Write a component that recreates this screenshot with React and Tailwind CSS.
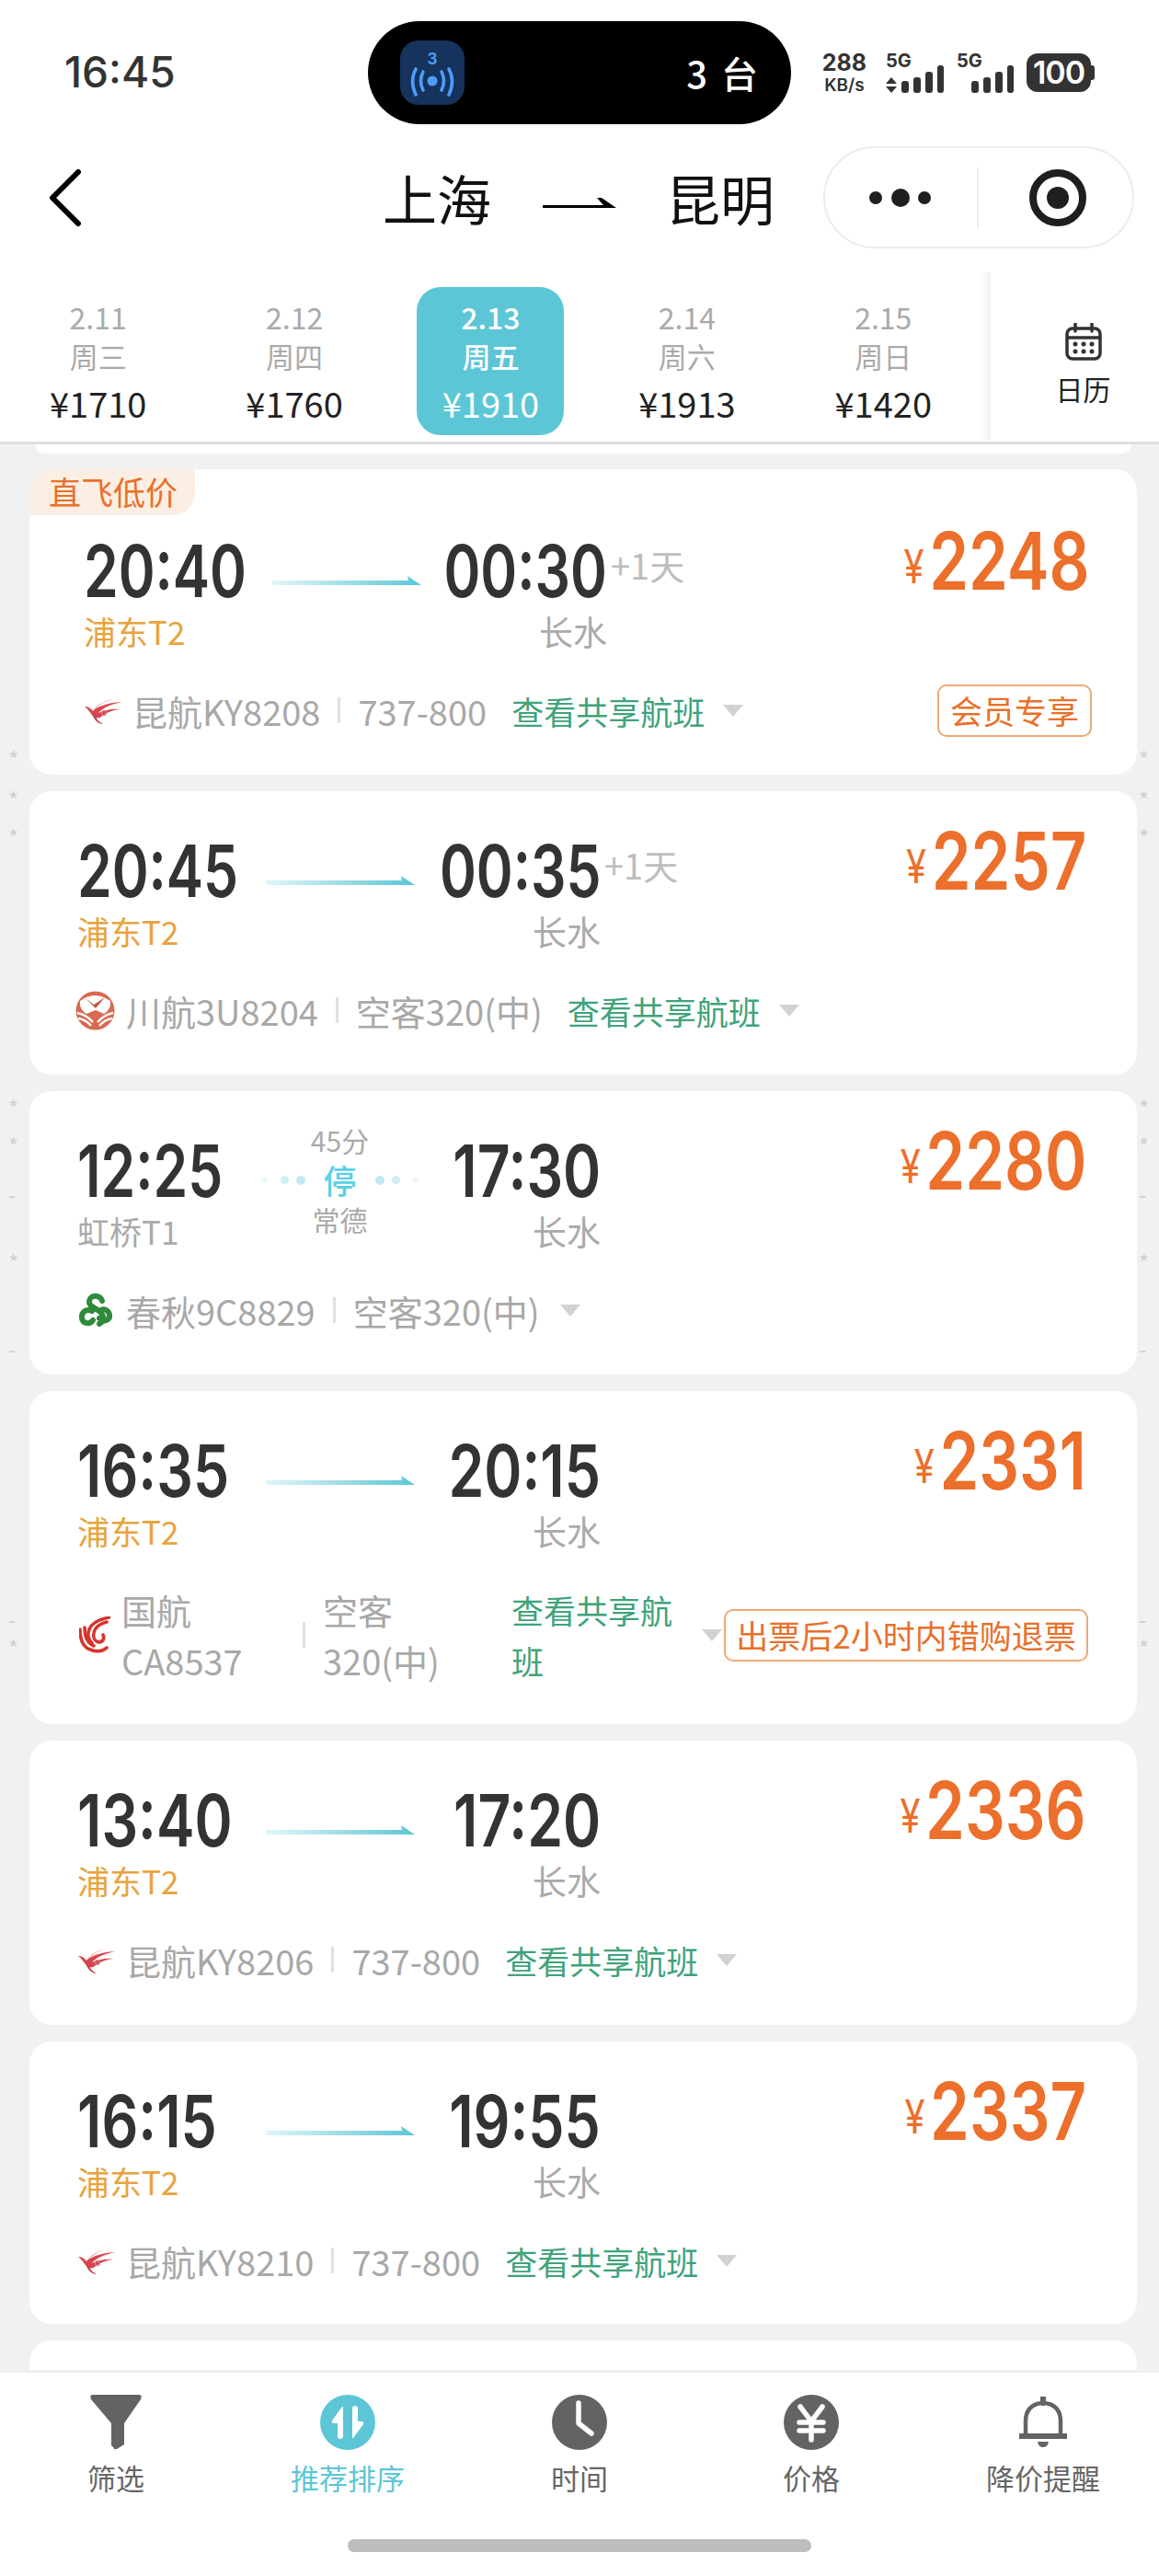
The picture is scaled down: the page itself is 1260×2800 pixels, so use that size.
const dates = [
    { d: '2.11', w: '周三', p: '¥1710' },
    { d: '2.12', w: '周四', p: '¥1760' },
    { d: '2.13', w: '周五', p: '¥1910', active: true },
    { d: '2.14', w: '周六', p: '¥1913' },
    { d: '2.15', w: '周日', p: '¥1420' },
];

const flights = [
    { h: 'h-[332px]', dep: '20:40', arr: '00:30', plus: true, from: '浦东T2', price: '2248', logo: 'ky', name: '昆航KY8208', model: '737-800', share: true, tag: '会员专享', promo: true },
    { h: 'h-[308px]', dep: '20:45', arr: '00:35', plus: true, from: '浦东T2', price: '2257', logo: '3u', name: '川航3U8204', model: '空客320(中)', share: true },
    { h: 'h-[308px]', dep: '12:25', arr: '17:30', from: '虹桥T1', gray: true, price: '2280', logo: '9c', name: '春秋9C8829', model: '空客320(中)', stop: true },
    { h: 'h-[362px]', dep: '16:35', arr: '20:15', from: '浦东T2', price: '2331', logo: 'ca', name: '国航CA8537', model: '空客320(中)', share: true, tag: '出票后2小时内错购退票', wrap: true },
    { h: 'h-[309px]', dep: '13:40', arr: '17:20', from: '浦东T2', price: '2336', logo: 'ky', name: '昆航KY8206', model: '737-800', share: true },
    { h: 'h-[307px]', dep: '16:15', arr: '19:55', from: '浦东T2', price: '2337', logo: 'ky', name: '昆航KY8210', model: '737-800', share: true },
];

const marks = [
    { y: 'top-[330px]', c: '*' }, { y: 'top-[374px]', c: '*' }, { y: 'top-[415px]', c: '*' },
    { y: 'top-[709px]', c: '*' }, { y: 'top-[750px]', c: '*' }, { y: 'top-[803px]', c: '-' },
    { y: 'top-[877px]', c: '*' }, { y: 'top-[971px]', c: '-' }, { y: 'top-[1265px]', c: '-' },
    { y: 'top-[1296px]', c: '*' },
];

const timeScale = (t) => (t === '12:25' || !t.includes('1') ? 'scale-x-[.775]' : 'scale-x-[.8]');

const Signal = () => (
    <svg width="46" height="30" viewBox="0 0 46 30" fill="#333">
        <rect x="0" y="17" width="8" height="13" rx="3" />
        <rect x="13" y="13" width="8" height="17" rx="3" />
        <rect x="26" y="7" width="8" height="23" rx="3" />
        <rect x="39" y="0" width="7" height="30" rx="3" />
    </svg>
);

const StatusBar = () => (
    <div className="flex items-center h-[159px] pb-[1px] relative">
        <div className="w-[400px] pl-[70px] pb-[2px] font-['Inter',sans-serif] font-medium text-[46px] leading-[56px] text-[#333]">16:45</div>
        <div className="w-[460px] h-[112px] -mt-[1px] rounded-full bg-black flex items-center justify-between pl-[35px] pr-[33px]">
            <div className="w-[70px] h-[70px] rounded-[20px] bg-[#15335c] flex flex-col items-center">
                <span className="font-['Inter',sans-serif] font-bold text-[17px] leading-[18px] mt-[11px] text-[#4c9cfb]">3</span>
                <svg width="52" height="34" viewBox="0 0 52 34" fill="none" stroke="#4c9cfb" strokeWidth="3.6" strokeLinecap="round">
                    <circle cx="26" cy="15" r="5.5" fill="#4c9cfb" stroke="none" />
                    <path d="M16 5 Q11 15 16 25" />
                    <path d="M36 5 Q41 15 36 25" />
                    <path d="M8 2 Q1 15 8 30" />
                    <path d="M44 2 Q51 15 44 30" />
                </svg>
            </div>
            <span className="text-white font-medium text-[40px] leading-[50px] tracking-[3px]">3 台</span>
        </div>
        <div className="flex items-start ml-[33px] text-[#333] font-['Inter',sans-serif]">
            <div className="w-[50px] flex flex-col items-center">
                <span className="font-bold text-[25px] leading-[28px]">288</span>
                <span className="font-semibold text-[19px] leading-[22px] whitespace-nowrap">KB/s</span>
            </div>
            <div className="relative w-[64px] h-[50px] ml-[20px]">
                <span className="absolute left-0 top-[1px] font-bold text-[20px] leading-[22px]">5G</span>
                <svg className="absolute left-0 top-[30px]" width="12" height="17" viewBox="0 0 12 17" fill="#333"><path d="M6 0 L12 7 H0 Z M0 10 H12 L6 17 Z" /></svg>
                <div className="absolute left-[17px] top-[17px]"><Signal /></div>
            </div>
            <div className="relative w-[64px] h-[50px] ml-[13px]">
                <span className="absolute left-0 top-[1px] font-bold text-[20px] leading-[22px]">5G</span>
                <div className="absolute left-[16px] top-[17px]"><Signal /></div>
            </div>
            <div className="flex items-center ml-[12px] mt-[4px]">
                <div className="w-[70px] h-[42px] rounded-[12px] bg-[#333] flex items-center justify-center text-white font-semibold text-[34px] leading-[42px] tracking-[-1px]">100</div>
                <div className="w-[4px] h-[16px] rounded-r-[3px] bg-[#333]"></div>
            </div>
        </div>
    </div>
);

const NavBar = () => (
    <div className="flex items-center h-[111px] relative">
        <svg className="ml-[50px]" width="42" height="64" viewBox="0 0 42 64" fill="none" stroke="#000" strokeWidth="6" strokeLinecap="round" strokeLinejoin="round">
            <path d="M35 4 L7 32 L35 60" />
        </svg>
        <span className="ml-[324px] text-[59px] leading-[70px] text-[#111]">上海</span>
        <svg className="ml-[56px] mt-[10px]" width="80" height="16" viewBox="0 0 80 16" fill="#000">
            <path d="M0 11 H66 L59 3 L64 3 L80 14 H0 Z" />
        </svg>
        <span className="ml-[54px] text-[59px] leading-[70px] text-[#111]">昆明</span>
        <div className="ml-[53px] w-[338px] h-[111px] rounded-full border-2 border-[#ececec] flex items-center">
            <svg className="ml-[44px]" width="74" height="24" viewBox="0 0 74 24" fill="#1f1f1f">
                <circle cx="11" cy="12" r="7" />
                <circle cx="38" cy="12" r="10" />
                <circle cx="64" cy="12" r="7" />
            </svg>
            <div className="ml-[47px] w-[2px] h-[66px] bg-[#ececec]"></div>
            <svg className="ml-[53px]" width="66" height="66" viewBox="0 0 66 66" fill="none">
                <circle cx="33" cy="33" r="27" stroke="#1f1f1f" strokeWidth="8" />
                <circle cx="33" cy="33" r="12" fill="#1f1f1f" />
            </svg>
        </div>
    </div>
);

const DateBar = () => (
    <div className="flex h-[213px] border-b-[3px] border-[#dedede] pt-[26px]">
        <div className="flex w-[1077px] shrink-0 pt-[16px] h-[177px]">
            {dates.map((x) => (
                <div key={x.d} className="w-[213.4px] flex justify-center">
                    <div className={`w-[160px] h-[161px] rounded-[26px] flex flex-col items-center ${x.active ? 'bg-[#5cc6d6] text-white' : ''}`}>
                        <span className={`mt-[11px] text-[32px] leading-[42px] ${x.active ? 'font-medium' : 'text-[#aaaaaa]'}`}>{x.d}</span>
                        <span className={`text-[31px] leading-[43px] ${x.active ? 'font-medium' : 'text-[#aaaaaa]'}`}>{x.w}</span>
                        <span className={`mt-[5px] text-[38px] leading-[50px] whitespace-nowrap ${x.active ? '' : 'text-[#222]'}`}>{x.p}</span>
                    </div>
                </div>
            ))}
        </div>
        <div className="flex-1 relative flex flex-col items-center pt-[55px] pl-[18px]">
            <div className="absolute left-[-12px] top-0 w-[12px] h-[182px] bg-gradient-to-r from-white to-[#f3f3f3]"></div>
            <svg width="42" height="42" viewBox="0 0 42 42" fill="none" stroke="#333" strokeWidth="3.5">
                <rect x="3" y="6" width="36" height="33" rx="6" />
                <path d="M3 16 H39" />
                <path d="M12 1 V9 M30 1 V9" strokeLinecap="round" />
                <g fill="#333" stroke="none">
                    <circle cx="12" cy="23" r="2.5" /><circle cx="21" cy="23" r="2.5" /><circle cx="30" cy="23" r="2.5" />
                    <circle cx="12" cy="31" r="2.5" /><circle cx="21" cy="31" r="2.5" /><circle cx="30" cy="31" r="2.5" />
                </g>
            </svg>
            <span className="mt-[9px] text-[30px] leading-[40px] text-[#222]">日历</span>
        </div>
    </div>
);

const Logo = ({ type }) => {
    if (type === 'ky') {
        return (
            <svg width="44" height="34" viewBox="0 0 44 34" className="ml-[-1px]">
                <path d="M43 2 C30 3 17 9 10 17 C15 12 30 8 41 8 C30 10 20 14 15 20 C22 17 30 15 38 16 C28 17 22 21 18 24 C14 27 10 25 7 21 C5 18 3 15 0 13 C4 13 7 15 9 18 C15 9 30 3 43 2 Z" fill="#d8454f" />
                <path d="M8 20 C10 28 15 32 20 32 C16 30 13 27 12 24 Z" fill="#c43d48" />
                <circle cx="21" cy="20" r="2.5" fill="none" stroke="#d8828a" strokeWidth="1.2" />
            </svg>
        );
    }
    if (type === '3u') {
        return (
            <svg width="43" height="43" viewBox="0 0 43 43" className="ml-[-4px]">
                <circle cx="21.5" cy="21.5" r="21" fill="#d9694f" />
                <path d="M5 11 Q21 -1 38 11 Q39 20 31 25 L22 21 L12 25 Q4 20 5 11 Z" fill="#fff" />
                <path d="M11 8 L20 15 L32 7 L22 19 Z" fill="#c8573f" />
                <path d="M2 24 Q12 26 19 34 M3 30 Q11 31 17 38 M41 24 Q31 26 24 34 M40 30 Q32 31 26 38" stroke="#fff" strokeWidth="2.4" fill="none" />
            </svg>
        );
    }
    if (type === '9c') {
        return (
            <svg width="36" height="38" viewBox="0 0 36 38" fill="none" stroke="#2f8a3b" strokeWidth="6" strokeLinecap="round">
                <path d="M25 9 C23 2 12 2 11 9 C10 15 18 17 22 20 C27 24 28 31 22 34" />
                <path d="M14 20 C7 17 2 22 3 28 C4 34 12 35 15 30" />
                <path d="M22 28 C28 33 34 29 33 24 C32 19 27 17 24 19" />
            </svg>
        );
    }
    return (
        <svg width="34" height="41" viewBox="0 0 34 41" fill="none" stroke="#d8342c" strokeWidth="3.6" strokeLinecap="round">
            <path d="M33 1 C22 3 14 7 11 14 C9 19 10 25 14 29" />
            <path d="M30 6 C22 8 17 12 16 18 C15 23 17 27 21 28 C26 28 28 24 26 20" />
            <path d="M1 14 C1 24 3 33 12 36 C19 39 26 38 30 34" />
            <path d="M6 12 C6 22 9 29 16 32" />
        </svg>
    );
};

const FlightArrow = () => (
    <svg width="162" height="16" viewBox="0 0 162 16">
        <defs>
            <linearGradient id="flightLine" x1="0" y1="0" x2="1" y2="0">
                <stop offset="0" stopColor="#e2f6f9" />
                <stop offset="1" stopColor="#5cc6d6" />
            </linearGradient>
        </defs>
        <path d="M0 8 H148 L147 3 L162 13 H0 Z" fill="url(#flightLine)" />
    </svg>
);

const StopBlock = () => (
    <div className="row-span-2 -mt-[24px] flex flex-col items-center text-[30px] leading-[43px] text-[#aaaaaa]">
        <span>45分</span>
        <div className="flex items-center h-[43px] shrink-0 whitespace-nowrap">
            <span className="w-[6px] h-[6px] rounded-full bg-[#e8f8fb]"></span>
            <span className="ml-[14px] w-[9px] h-[9px] rounded-full bg-[#cfeff5]"></span>
            <span className="ml-[8px] w-[10px] h-[10px] rounded-full bg-[#bfeaf2]"></span>
            <span className="mx-[20px] text-[36px] font-medium text-[#5bd0e6]">停</span>
            <span className="w-[10px] h-[10px] rounded-full bg-[#bfeaf2]"></span>
            <span className="ml-[8px] w-[9px] h-[9px] rounded-full bg-[#cfeff5]"></span>
            <span className="ml-[14px] w-[6px] h-[6px] rounded-full bg-[#e8f8fb]"></span>
        </div>
        <span>常德</span>
    </div>
);

const Caret = () => (
    <svg width="22" height="13" viewBox="0 0 22 13" className="shrink-0" fill="#d2d2d2"><path d="M0 0 H22 L11 13 Z" /></svg>
);

const FlightCard = ({ f }) => (
    <div className={`${f.h} bg-white rounded-[24px] relative shrink-0 ${f.promo ? 'pt-[80px] pl-[59px] pr-[51px]' : 'pt-[56px] pl-[52px] pr-[55px]'}`}>
        {f.promo && (
            <div className="absolute left-0 top-0 w-[180px] h-[50px] bg-[#fdeee3] rounded-tl-[24px] rounded-br-[24px] pl-[21px] text-[35px] leading-[48px] text-[#e8702a]">直飞低价</div>
        )}
        <div className="flex items-start h-[155px]">
            <div className="grid grid-cols-[205px_161px_203px] grid-rows-[62px_50px] gap-y-[9px]">
                <div className="font-['Inter',sans-serif] font-semibold text-[78px] leading-[62px] text-[#333] whitespace-nowrap">
                    <span className={`inline-block origin-left ${timeScale(f.dep)}`}>{f.dep}</span>
                </div>
                {f.stop ? <StopBlock /> : <div className="row-span-2 mt-[33px]"><FlightArrow /></div>}
                <div className="relative flex justify-end font-['Inter',sans-serif] font-semibold text-[78px] leading-[62px] text-[#333] whitespace-nowrap">
                    <span className={`shrink-0 origin-right ${timeScale(f.arr)}`}>{f.arr}</span>
                    {f.plus && <span className="absolute left-full top-0 ml-[4px] font-['Noto_Sans_CJK_SC',sans-serif] font-normal text-[38px] leading-[48px] text-[#bdbdbd]">+1天</span>}
                </div>
                <div className={`text-[35px] leading-[50px] ${f.gray ? 'text-[#aaaaaa]' : 'text-[#e8a33d]'}`}>{f.from}</div>
                <div className="text-right text-[37px] leading-[50px] text-[#aaaaaa]">长水</div>
            </div>
            <div className="ml-auto -mt-[12px] font-['Inter',sans-serif] font-semibold text-[#ec6f2b] whitespace-nowrap">
                <div className="flex items-start origin-right scale-x-[.8]">
                    <span className="text-[50px] leading-[50px] mt-[13px] mr-[7px] font-normal">¥</span>
                    <span className="text-[86px] leading-[64px]">{f.price}</span>
                </div>
            </div>
        </div>
        <div className={`flex items-center ml-[2px] -mt-[1px] ${f.wrap ? 'h-[110px]' : 'h-[56px]'} text-[38px] leading-[55px] text-[#a8a8a8]`}>
            <div className={`shrink-0 flex items-center ${f.wrap ? 'w-[46px]' : 'w-[51px]'}`}><Logo type={f.logo} /></div>
            <span className={`shrink-0 ${f.wrap ? 'w-[178px]' : 'whitespace-nowrap'}`}>{f.name}</span>
            <span className="shrink-0 w-[3px] h-[28px] mx-[19px] bg-[#e0e0e0]"></span>
            <span className={`shrink-0 ${f.wrap ? 'w-[178px]' : 'whitespace-nowrap'}`}>{f.model}</span>
            {f.share && <span className={`shrink-0 ml-[27px] text-[35px] text-[#3fa37a] ${f.wrap ? 'w-[180px]' : 'whitespace-nowrap'}`}>查看共享航班</span>}
            <span className={`shrink-0 ${f.wrap ? 'ml-[27px]' : f.share ? 'ml-[20px]' : 'ml-[22px]'}`}><Caret /></span>
            {f.tag && (
                <span className={`shrink-0 ml-auto h-[57px] border-2 border-[#f0a875] rounded-[10px] text-[35px] leading-[51px] text-[#e8702a] text-center whitespace-nowrap ${f.wrap ? 'w-[396px] -mr-[2px]' : 'w-[168px] mr-[-2px]'}`}>{f.tag}</span>
            )}
        </div>
    </div>
);

const tabs = [
    { label: '筛选', icon: <svg width="58" height="60" viewBox="0 0 58 60" fill="#636363"><path d="M4 0 H54 Q58 0 56 5 L38 31 V54 L30 59 Q27 60 26 57 L24 55 V31 L2 5 Q0 0 4 0 Z" /></svg> },
    {
        label: '推荐排序', active: true, icon: (
            <svg width="60" height="60" viewBox="0 0 60 60">
                <circle cx="30" cy="30" r="30" fill="#5cc6d6" />
                <path d="M24 13 L13 28 Q12 31 15 31 H19 V45 Q19 48 22 48 Q25 48 25 45 V15 Q25 12 24 13 Z" fill="#fff" />
                <path d="M36 47 L47 32 Q48 29 45 29 H41 V15 Q41 12 38 12 Q35 12 35 15 V45 Q35 48 36 47 Z" fill="#fff" />
            </svg>
        ),
    },
    {
        label: '时间', icon: (
            <svg width="60" height="60" viewBox="0 0 60 60">
                <circle cx="30" cy="30" r="30" fill="#636363" />
                <path d="M29 9 V31 L43 42" fill="none" stroke="#fff" strokeWidth="5.5" strokeLinecap="round" strokeLinejoin="round" />
            </svg>
        ),
    },
    {
        label: '价格', icon: (
            <svg width="60" height="60" viewBox="0 0 60 60">
                <circle cx="30" cy="30" r="30" fill="#636363" />
                <path d="M18 13 L30 29 L42 13 M30 29 V49 M17 30 H43 M17 39 H43" fill="none" stroke="#fff" strokeWidth="5.5" strokeLinecap="round" />
            </svg>
        ),
    },
    {
        label: '降价提醒', icon: (
            <svg width="54" height="56" viewBox="0 0 54 56" fill="none" stroke="#636363" strokeWidth="4.5">
                <path d="M8 41 V26 C8 15 15 7 27 7 C39 7 46 15 46 26 V41" />
                <path d="M1 43 H53" strokeWidth="6" />
                <path d="M27 0 V7" strokeWidth="6" strokeLinecap="round" />
                <path d="M21 49 H33 Q32 55 27 55 Q22 55 21 49 Z" fill="#636363" stroke="none" />
            </svg>
        ),
    },
];

const BottomBar = () => (
    <div className="relative h-[224px] shrink-0 bg-white border-t-[3px] border-[#f0f0f0]">
        <div className="grid grid-cols-5 pt-[24px]">
            {tabs.map((t) => (
                <div key={t.label} className="flex flex-col items-center">
                    <div className="h-[60px] flex items-center justify-center">{t.icon}</div>
                    <span className={`mt-[9px] text-[31px] leading-[42px] ${t.active ? 'text-[#5cc6d6]' : 'text-[#666]'}`}>{t.label}</span>
                </div>
            ))}
        </div>
        <div className="mx-auto mt-[46px] w-[504px] h-[14px] rounded-full bg-[#bdbdbd]"></div>
    </div>
);

export default function App() {
    return (
        <div className="w-[1260px] h-[2800px] flex flex-col overflow-hidden bg-[#f1f1f1] font-['Noto_Sans_CJK_SC','Noto_Sans',sans-serif]">
            <div className="bg-white shrink-0">
                <StatusBar />
                <NavBar />
                <DateBar />
            </div>
            <div className="flex-1 relative overflow-hidden">
                <div className="mx-[38px] w-[1192px] h-[10px] rounded-b-[24px] bg-white mb-[17px]"></div>
                <div className="ml-[32px] w-[1204px] flex flex-col gap-[18px]">
                    {flights.map((f) => <FlightCard key={f.name} f={f} />)}
                    <div className="h-[60px] bg-white rounded-t-[24px] shrink-0"></div>
                </div>
                {marks.map((m, i) => (
                    <span key={i} className={`absolute left-[9px] ${m.y} text-[24px] leading-[24px] text-[#cfcfcf]`}>{m.c}</span>
                ))}
                {marks.map((m, i) => (
                    <span key={i} className={`absolute left-[1238px] ${m.y} text-[24px] leading-[24px] text-[#cfcfcf]`}>{m.c}</span>
                ))}
            </div>
            <BottomBar />
        </div>
    );
}
